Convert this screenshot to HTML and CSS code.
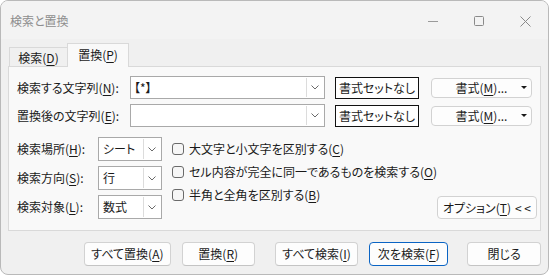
FILE: index.html
```html
<!DOCTYPE html>
<html lang="ja">
<head>
<meta charset="utf-8">
<title>検索と置換</title>
<link rel="stylesheet" href="styles.css">
</head>
<body>
<div class="window">
  <div class="titlebar">
    <span class="title">検索と置換</span>
    <div class="caption">
      <span class="cap"><svg width="10" height="10" viewBox="0 0 10 10"><line x1="0" y1="5.5" x2="10" y2="5.5" stroke="#9a9a9a" stroke-width="1"/></svg></span>
      <span class="cap"><svg width="10" height="10" viewBox="0 0 10 10"><rect x="0.5" y="0.5" width="9" height="9" rx="1" fill="none" stroke="#8a8a8a" stroke-width="1"/></svg></span>
      <span class="cap"><svg width="11" height="11" viewBox="0 0 11 11"><path d="M0.5 0.5 L10.5 10.5 M10.5 0.5 L0.5 10.5" stroke="#8a8a8a" stroke-width="1" fill="none"/></svg></span>
    </div>
  </div>
  <div class="body">
    <div class="tabs">
      <div class="tab">検索(<u>D</u>)</div>
      <div class="tab active">置換(<u>P</u>)</div>
    </div>
    <div class="panel">
      <div class="row">
        <span class="lbl lbl-long">検索する文字列(<u>N</u>):</span>
        <div class="combo combo-wide"><span class="val">【*】</span><span class="arrow"><svg width="8" height="5" viewBox="0 0 8 5"><polyline points="0.5,0.5 4,4 7.5,0.5" fill="none" stroke="#6a6a6a" stroke-width="1"/></svg></span></div>
        <div class="fmt-none">書式セットなし</div>
        <div class="fmt-btn"><span></span><span>書式(<u>M</u>)...</span><span class="tri"></span></div>
      </div>
      <div class="row row2">
        <span class="lbl lbl-long">置換後の文字列(<u>E</u>):</span>
        <div class="combo combo-wide"><span class="val"></span><span class="arrow"><svg width="8" height="5" viewBox="0 0 8 5"><polyline points="0.5,0.5 4,4 7.5,0.5" fill="none" stroke="#6a6a6a" stroke-width="1"/></svg></span></div>
        <div class="fmt-none">書式セットなし</div>
        <div class="fmt-btn"><span></span><span>書式(<u>M</u>)...</span><span class="tri"></span></div>
      </div>
      <div class="lower">
        <div class="selects">
          <div class="srow">
            <span class="lbl lbl-short">検索場所(<u>H</u>):</span>
            <div class="combo combo-small"><span class="val">シート</span><span class="arrow"><svg width="8" height="5" viewBox="0 0 8 5"><polyline points="0.5,0.5 4,4 7.5,0.5" fill="none" stroke="#6a6a6a" stroke-width="1"/></svg></span></div>
          </div>
          <div class="srow">
            <span class="lbl lbl-short">検索方向(<u>S</u>):</span>
            <div class="combo combo-small"><span class="val">行</span><span class="arrow"><svg width="8" height="5" viewBox="0 0 8 5"><polyline points="0.5,0.5 4,4 7.5,0.5" fill="none" stroke="#6a6a6a" stroke-width="1"/></svg></span></div>
          </div>
          <div class="srow">
            <span class="lbl lbl-short">検索対象(<u>L</u>):</span>
            <div class="combo combo-small"><span class="val">数式</span><span class="arrow"><svg width="8" height="5" viewBox="0 0 8 5"><polyline points="0.5,0.5 4,4 7.5,0.5" fill="none" stroke="#6a6a6a" stroke-width="1"/></svg></span></div>
          </div>
        </div>
        <div class="checks">
          <div class="chk"><span class="box"></span><span>大文字と小文字を区別する(<u>C</u>)</span></div>
          <div class="chk"><span class="box"></span><span>セル内容が完全に同一であるものを検索する(<u>O</u>)</span></div>
          <div class="chk"><span class="box"></span><span>半角と全角を区別する(<u>B</u>)</span></div>
        </div>
        <div class="opt-btn">オプション(<u>T</u>) <span class="lt">&lt; &lt;</span></div>
      </div>
    </div>
    <div class="footer">
      <div class="btn b1">すべて置換(<u>A</u>)</div>
      <div class="btn b2">置換(<u>R</u>)</div>
      <div class="btn b3">すべて検索(<u>I</u>)</div>
      <div class="btn b4 default">次を検索(<u>F</u>)</div>
      <div class="btn b5">閉じる</div>
    </div>
  </div>
</div>
</body>
</html>
```

FILE: styles.css
```css
* { box-sizing: border-box; }

body {
  margin: 0;
  background: #ffffff;
  font-family: "Noto Sans CJK JP", "Noto Sans", sans-serif;
  font-size: 12px;
  font-feature-settings: "palt";
  color: #1a1a1a;
  line-height: 1;
  white-space: nowrap;
}

u { text-decoration: underline; text-underline-offset: 2px; text-decoration-thickness: 1px; }

.window {
  width: 549px;
  height: 275px;
  border: 1px solid #b9b9b9;
  border-radius: 8px;
  background: #f0f0f0;
  display: flex;
  flex-direction: column;
  overflow: hidden;
}

.titlebar {
  height: 38px;
  display: flex;
  align-items: center;
  background: #f3f3f3;
}

.title {
  flex: 1;
  padding-left: 9px;
  padding-top: 2px;
  color: #8e8e8e;
}

.caption {
  display: flex;
  height: 100%;
}

.cap {
  width: 46px;
  display: flex;
  align-items: center;
  justify-content: center;
  padding-top: 2px;
}

.body {
  flex: 1;
  display: flex;
  flex-direction: column;
  padding: 4px 7px 0 7px;
}

.tabs {
  display: flex;
  align-items: flex-end;
  height: 23px;
  padding-left: 1px;
}

.tab {
  width: 58px;
  height: 19px;
  border: 1px solid #d9d9d9;
  border-bottom: none;
  border-right: none;
  display: flex;
  align-items: center;
  justify-content: center;
  padding-top: 1px;
  background: #f0f0f0;
}

.tab.active {
  width: 62px;
  height: 24px;
  border-right: 1px solid #d9d9d9;
  background: #f9f9f9;
  margin-bottom: -1px;
  position: relative;
  z-index: 1;
  padding-top: 0;
  padding-bottom: 1px;
}

.panel {
  height: 165px;
  border: 1px solid #d9d9d9;
  background: #f9f9f9;
  padding: 9px 8px 0 8px;
  display: flex;
  flex-direction: column;
}

.row {
  display: flex;
  align-items: center;
  height: 23px;
}

.row2 { margin-top: 5px; }

.lbl-long { width: 113px; }
.lbl-short { width: 81px; }

.combo {
  display: flex;
  align-items: stretch;
  background: #ffffff;
  border: 1px solid #a9a9a9;
}

.combo-wide { width: 195px; height: 23px; }
.combo-small { width: 64px; height: 24px; }

.combo .val {
  flex: 1;
  display: flex;
  align-items: center;
  padding-left: 3px;
}

.combo-small .val { padding-left: 4px; }

.combo .arrow {
  width: 17px;
  display: flex;
  align-items: center;
  justify-content: center;
  border-left: 1px solid #dcdcdc;
  margin: 1px;
  background: #ffffff;
}

.fmt-none {
  margin-left: 10px;
  width: 84px;
  height: 22px;
  border: 1px solid #111111;
  background: #ffffff;
  display: flex;
  align-items: center;
  justify-content: center;
}

.fmt-btn {
  margin-left: 12px;
  width: 101px;
  height: 20px;
  border: 1px solid #d2d2d2;
  border-radius: 4px;
  background: #fdfdfd;
  display: grid;
  grid-template-columns: 1fr auto 1fr;
  align-items: center;
}

.fmt-btn .tri {
  justify-self: end;
  margin-right: 4px;
  width: 0;
  height: 0;
  border-left: 3px solid transparent;
  border-right: 3px solid transparent;
  border-top: 3px solid #1a1a1a;
}

.lower {
  display: flex;
  margin-top: 10px;
}

.selects {
  display: flex;
  flex-direction: column;
  gap: 5px;
}

.srow {
  display: flex;
  align-items: center;
}

.checks {
  margin-left: 10px;
  display: flex;
  flex-direction: column;
}

.chk {
  height: 23px;
  display: flex;
  align-items: center;
}

.chk .box {
  width: 12px;
  height: 12px;
  border: 1px solid #6a6a6a;
  border-radius: 3px;
  background: #f6f6f6;
  margin-right: 5px;
  flex: none;
}

.opt-btn {
  margin-left: auto;
  align-self: flex-end;
  width: 100px;
  height: 23px;
  border: 1px solid #d2d2d2;
  border-radius: 4px;
  background: #fdfdfd;
  display: flex;
  align-items: center;
  justify-content: center;
  flex: none;
}

.opt-btn .lt { margin-left: 4px; }

.footer {
  display: flex;
  margin-top: 11px;
  padding-left: 76px;
}

.btn {
  height: 24px;
  border: 1px solid #d2d2d2;
  border-bottom-color: #c4c4c4;
  border-radius: 4px;
  background: #fdfdfd;
  display: flex;
  align-items: center;
  justify-content: center;
}

.b1 { width: 87px; }
.b2 { width: 73px; margin-left: 11px; }
.b3 { width: 84px; margin-left: 20px; }
.b4 { width: 79px; margin-left: 11px; }
.b5 { width: 74px; margin-left: 19px; }

.btn.default {
  border: 1px solid #0a64c4;
}
```
